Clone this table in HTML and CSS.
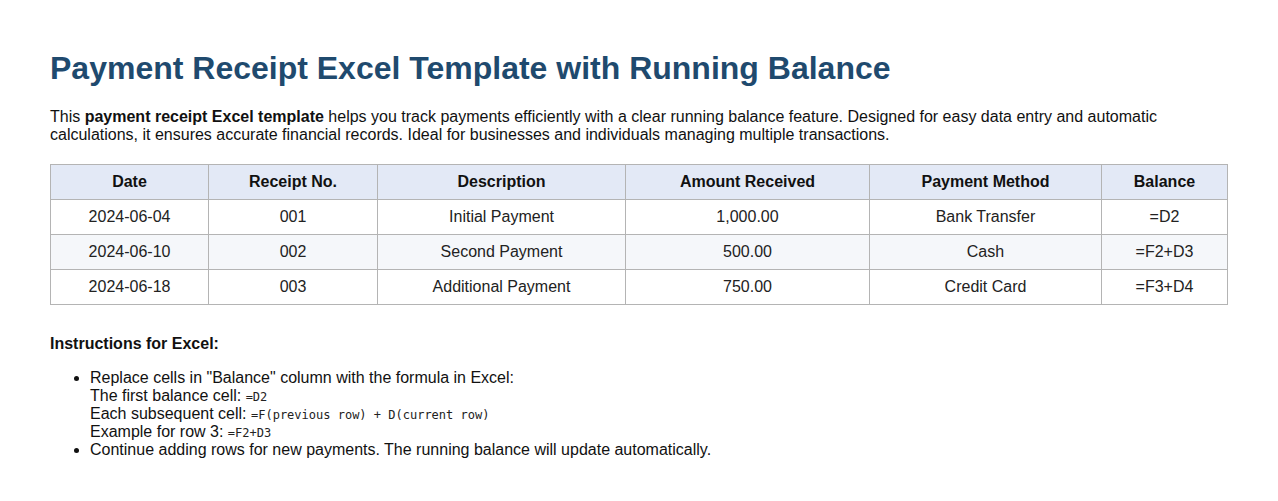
FILE: index.html
```html
<!DOCTYPE html>
<html>
<head>
<meta charset="utf-8">
<link rel="stylesheet" href="styles.css">
</head>
<body>
<main class="page">
  <h1 class="title">Payment Receipt Excel Template with Running Balance</h1>
  <p class="intro">This <strong>payment receipt Excel template</strong> helps you track payments efficiently with a clear running balance feature. Designed for easy data entry and automatic calculations, it ensures accurate financial records. Ideal for businesses and individuals managing multiple transactions.</p>
  <table class="receipts">
    <colgroup>
      <col class="c-date"><col class="c-no"><col class="c-desc"><col class="c-amt"><col class="c-method"><col class="c-bal">
    </colgroup>
    <thead>
      <tr><th>Date</th><th>Receipt No.</th><th>Description</th><th>Amount Received</th><th>Payment Method</th><th>Balance</th></tr>
    </thead>
    <tbody>
      <tr><td>2024-06-04</td><td>001</td><td>Initial Payment</td><td>1,000.00</td><td>Bank Transfer</td><td>=D2</td></tr>
      <tr><td>2024-06-10</td><td>002</td><td>Second Payment</td><td>500.00</td><td>Cash</td><td>=F2+D3</td></tr>
      <tr><td>2024-06-18</td><td>003</td><td>Additional Payment</td><td>750.00</td><td>Credit Card</td><td>=F3+D4</td></tr>
    </tbody>
  </table>
  <p class="instr-title"><strong>Instructions for Excel:</strong></p>
  <ul class="instr">
    <li>Replace cells in "Balance" column with the formula in Excel:<br>
      The first balance cell: <code>=D2</code><br>
      Each subsequent cell: <code>=F(previous row) + D(current row)</code><br>
      Example for row 3: <code>=F2+D3</code></li>
    <li>Continue adding rows for new payments. The running balance will update automatically.</li>
  </ul>
</main>
</body>
</html>
```
FILE: styles.css
```css
html, body {
  margin: 0;
  padding: 0;
  background: #fff;
}
body {
  font-family: "Liberation Sans", Arial, sans-serif;
  font-size: 16px;
  line-height: 18px;
  color: #111;
}
.page {
  padding: 50px 50px 20px 50px;
}
.title {
  margin: 0 0 21px 0;
  font-size: 32px;
  line-height: 37px;
  font-weight: bold;
  color: #1f4a6e;
}
.intro {
  margin: 0 0 20px 0;
}
.receipts {
  width: 100%;
  border-collapse: collapse;
  table-layout: fixed;
  margin: 0 0 30px 0;
  color: #222;
}
.c-date { width: 158px; }
.c-no { width: 169px; }
.c-desc { width: 248px; }
.c-amt { width: 244px; }
.c-method { width: 232px; }
.c-bal { width: auto; }
.receipts th, .receipts td {
  border: 1px solid #b4b4b4;
  text-align: center;
  padding: 0 8px;
  height: 34px;
}
.receipts th {
  background: #e3e9f6;
  font-weight: bold;
  color: #111;
  height: 34px;
}
.receipts tbody tr:nth-child(even) td {
  background: #f5f7fa;
}
.instr-title {
  margin: 0 0 16px 0;
}
.instr {
  margin: 0;
  padding-left: 40px;
}
.instr code {
  font-family: "DejaVu Sans Mono", "Liberation Mono", monospace;
  font-size: 12px;
  line-height: 1;
  color: #222;
}
```
